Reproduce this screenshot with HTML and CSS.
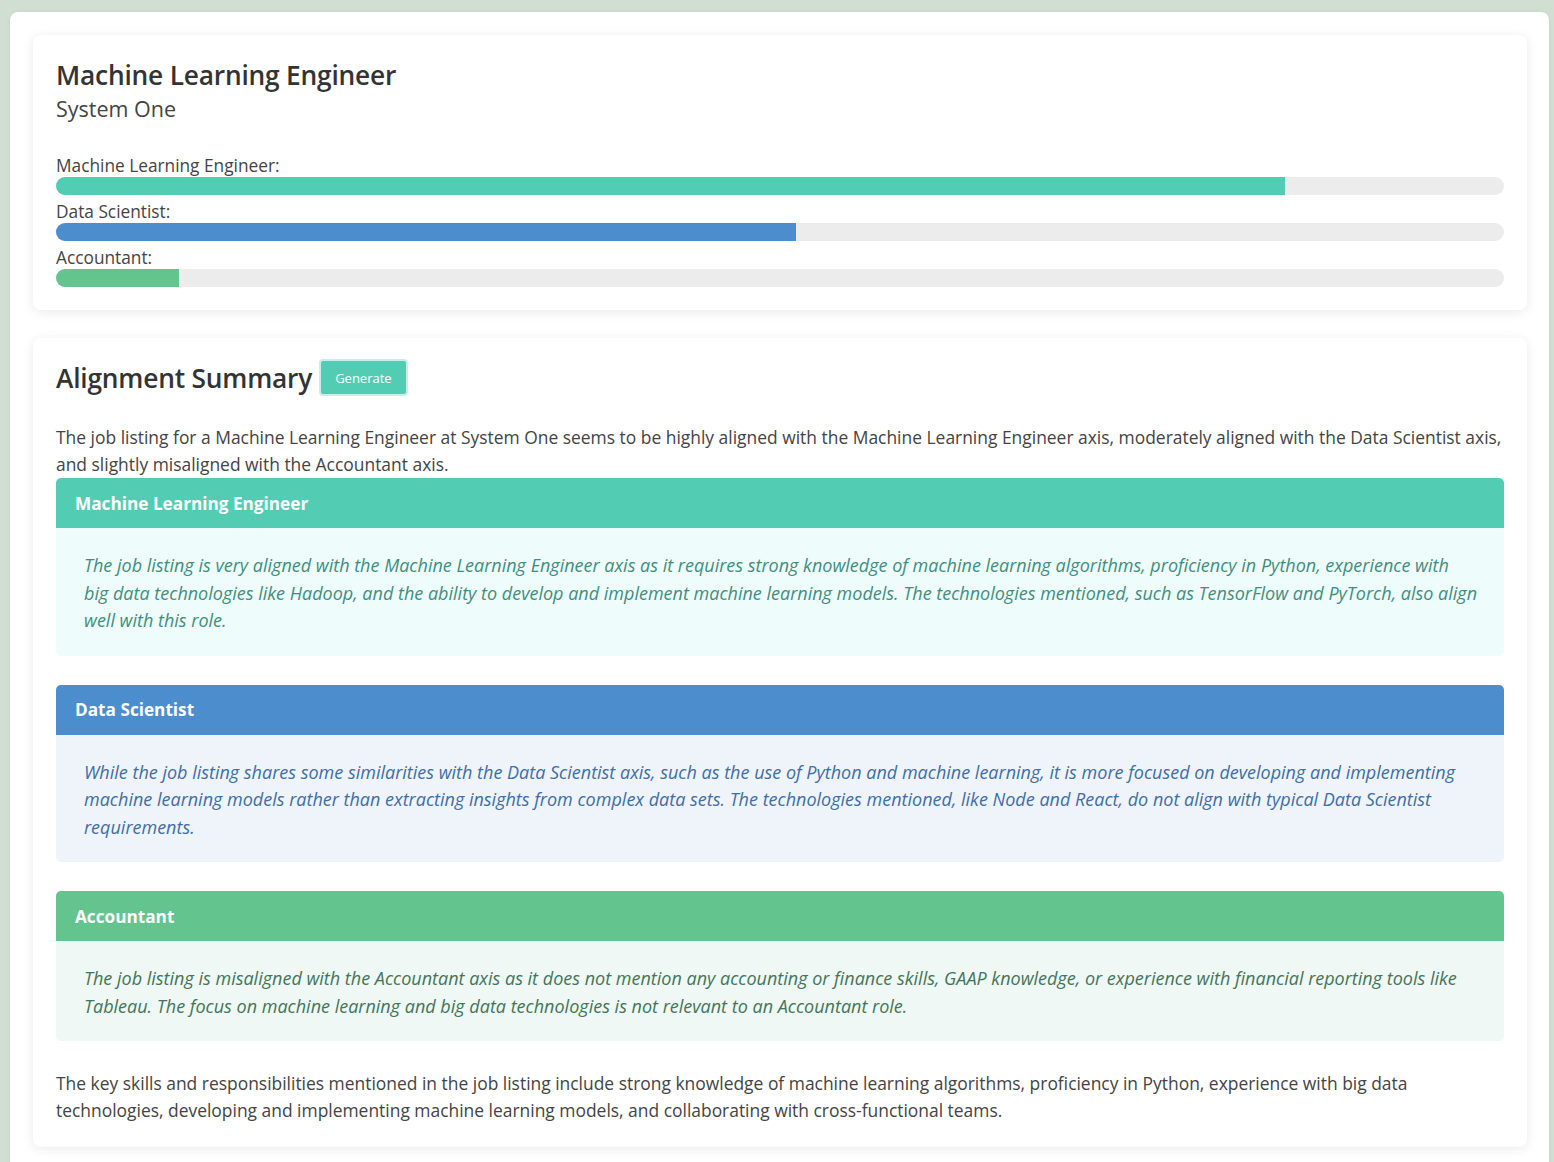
FILE: index.html
```html
<!DOCTYPE html>
<html lang="en">
<head>
<meta charset="utf-8">
<title>Alignment</title>
<link rel="stylesheet" href="styles.css">
</head>
<body>
<div class="page">
  <section class="card">
    <h1 class="title">Machine Learning Engineer</h1>
    <div class="subtitle">System One</div>
    <div class="scores">
      <div class="score">
        <div class="label">Machine Learning Engineer:</div>
        <div class="track"><div class="fill fill-teal" style="width: 84.9%"></div></div>
      </div>
      <div class="score">
        <div class="label">Data Scientist:</div>
        <div class="track"><div class="fill fill-blue" style="width: 51.1%"></div></div>
      </div>
      <div class="score">
        <div class="label">Accountant:</div>
        <div class="track"><div class="fill fill-green" style="width: 8.5%"></div></div>
      </div>
    </div>
  </section>

  <section class="card card-summary">
    <div class="summary-head">
      <h2 class="title">Alignment Summary</h2>
      <button class="btn">Generate</button>
    </div>
    <p class="text intro">The job listing for a Machine Learning Engineer at System One seems to be highly aligned with the Machine Learning Engineer axis, moderately aligned with the Data Scientist axis, and slightly misaligned with the Accountant axis.</p>

    <div class="axis axis-teal">
      <div class="axis-head">Machine Learning Engineer</div>
      <div class="axis-body">The job listing is very aligned with the Machine Learning Engineer axis as it requires strong knowledge of machine learning algorithms, proficiency in Python, experience with<br>big data technologies like Hadoop, and the ability to develop and implement machine learning models. The technologies mentioned, such as TensorFlow and PyTorch, also align well with this role.</div>
    </div>

    <div class="axis axis-blue">
      <div class="axis-head">Data Scientist</div>
      <div class="axis-body">While the job listing shares some similarities with the Data Scientist axis, such as the use of Python and machine learning, it is more focused on developing and implementing machine learning models rather than extracting insights from complex data sets. The technologies mentioned, like Node and React, do not align with typical Data Scientist requirements.</div>
    </div>

    <div class="axis axis-green">
      <div class="axis-head">Accountant</div>
      <div class="axis-body">The job listing is misaligned with the Accountant axis as it does not mention any accounting or finance skills, GAAP knowledge, or experience with financial reporting tools like Tableau. The focus on machine learning and big data technologies is not relevant to an Accountant role.</div>
    </div>

    <p class="text outro">The key skills and responsibilities mentioned in the job listing include strong knowledge of machine learning algorithms, proficiency in Python, experience with big data technologies, developing and implementing machine learning models, and collaborating with cross-functional teams.</p>
  </section>
</div>
</body>
</html>
```

FILE: styles.css
```css
html, body {
  margin: 0;
  padding: 0;
}

body {
  background: #d0dfd2;
  font-family: "Open Sans", "Noto Sans", sans-serif;
  color: #444;
  height: 1162px;
  overflow: hidden;
}

.page {
  margin: 12px 5px 0 10px;
  background: #fff;
  border-radius: 8px;
  padding: 23px 22px 60px 23px;
  display: flex;
  flex-direction: column;
  gap: 28px;
  box-shadow: 0 0 6px rgba(0, 0, 0, 0.04);
}

.card {
  background: #fff;
  border-radius: 8px;
  padding: 23px;
  box-shadow: 0 2px 12px rgba(0, 0, 0, 0.09);
}

.title {
  margin: 0;
  font-size: 26.3px;
  font-weight: 600;
  line-height: 34px;
  color: #333;
  letter-spacing: -0.2px;
}

.subtitle {
  margin-top: 3px;
  font-size: 21.5px;
  line-height: 27px;
  color: #444;
}

.scores {
  margin-top: 32px;
  display: flex;
  flex-direction: column;
  gap: 5px;
}

.score {
  display: flex;
  flex-direction: column;
  gap: 0;
}

.label {
  font-size: 17.3px;
  line-height: 23px;
  color: #444;
}

.track {
  height: 18px;
  background: #ececec;
  border-radius: 9px;
  overflow: hidden;
}

.fill {
  height: 100%;
}

.fill-teal { background: #52cdb3; }
.fill-blue { background: #4b8dcd; }
.fill-green { background: #64c48e; }

.card-summary {
  padding-top: 21px;
}

.summary-head {
  display: flex;
  align-items: center;
  gap: 7px;
}

.btn {
  font-family: "Open Sans", sans-serif;
  font-size: 13px;
  color: #fff;
  background: #52cdb3;
  border: 2px solid #c6efe5;
  border-radius: 4px;
  height: 37px;
  padding: 0 14px;
}

.text {
  margin: 0;
  font-size: 17.43px;
  line-height: 27px;
  color: #444;
}

.intro {
  margin-top: 28px;
}

.axis {
  border-radius: 5px;
  overflow: hidden;
  margin-bottom: 29px;
}

.axis-head {
  height: 50px;
  display: flex;
  align-items: center;
  padding: 0 19px;
  color: #fff;
  font-weight: 700;
  font-size: 17.2px;
}

.axis-body {
  padding: 24px 22px 21px 28px;
  font-style: italic;
  font-size: 18px;
  line-height: 27.5px;
}

.axis-teal .axis-head { background: #52cdb3; }
.axis-teal .axis-body { background: #eefdfb; color: #3f8e7f; }

.axis-blue .axis-head { background: #4b8dcd; }
.axis-blue .axis-body { background: #eff4fb; color: #406ea6; }

.axis-green .axis-head { background: #64c48e; }
.axis-green .axis-body { background: #eff8f4; color: #43755a; }

.outro {
  margin-top: 0;
}
```
